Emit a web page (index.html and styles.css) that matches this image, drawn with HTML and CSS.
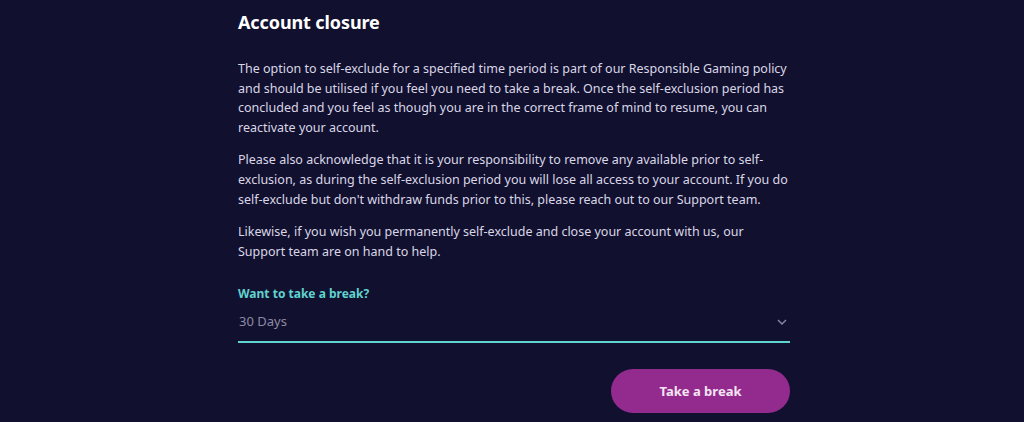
FILE: index.html
```html
<!DOCTYPE html>
<html lang="en">
<head>
<meta charset="utf-8">
<link rel="stylesheet" href="styles.css">
</head>
<body>
<main class="panel">
  <h1 class="title">Account closure</h1>
  <p class="text">The option to self-exclude for a specified time period is part of our Responsible Gaming policy and should be utilised if you feel you need to take a break. Once the self-exclusion period has concluded and you feel as though you are in the correct frame of mind to resume, you can reactivate your account.</p>
  <p class="text">Please also acknowledge that it is your responsibility to remove any available prior to self-exclusion, as during the self-exclusion period you will lose all access to your account. If you do self-exclude but don't withdraw funds prior to this, please reach out to our Support team.</p>
  <p class="text">Likewise, if you wish you permanently self-exclude and close your account with us, our Support team are on hand to help.</p>
  <div class="field">
    <label class="label">Want to take a break?</label>
    <div class="select">
      <span class="value">30 Days</span>
      <svg class="chev" width="10" height="6" viewBox="0 0 10 6"><path d="M1 1l4 4 4-4" fill="none" stroke="#8a88a0" stroke-width="1.4"/></svg>
    </div>
  </div>
  <div class="actions">
    <button class="btn">Take a break</button>
  </div>
</main>
</body>
</html>
```
FILE: styles.css
```css
html, body { margin: 0; padding: 0; }
body {
  background: #12102f;
  font-family: "Noto Sans", "Open Sans", sans-serif;
  color: #d9d7e6;
  height: 422px;
  overflow: hidden;
}
.panel {
  box-sizing: border-box;
  width: 556px;
  margin: 0 auto;
  padding-left: 4px;
}
.title {
  font-family: "Noto Sans", sans-serif;
  font-weight: 700;
  font-size: 18px;
  line-height: 24px;
  color: #ffffff;
  margin: 10px 0 25px;
  letter-spacing: -0.1px;
}
.text {
  font-size: 12.5px;
  line-height: 19.6px;
  margin: 0 0 13px;
}
.field { margin-top: 25px; }
.label {
  display: block;
  font-size: 12px;
  font-weight: 700;
  color: #5fd3cf;
  line-height: 16px;
}
.select {
  display: flex;
  align-items: flex-start;
  justify-content: space-between;
  height: 41px;
  box-sizing: border-box;
  border-bottom: 2px solid #5fd3cf;
  padding: 10px 3px 0 1px;
}
.value {
  font-size: 13px;
  line-height: 18px;
  color: #8d8ba3;
}
.chev { margin-top: 7px; }
.actions {
  display: flex;
  justify-content: flex-end;
  margin-top: 26px;
}
.btn {
  width: 179px;
  height: 44px;
  border: 0;
  border-radius: 22px;
  background: #932a8e;
  color: #f3e6f2;
  font-family: "Noto Sans", sans-serif;
  font-size: 13px;
  font-weight: 700;
}
```
